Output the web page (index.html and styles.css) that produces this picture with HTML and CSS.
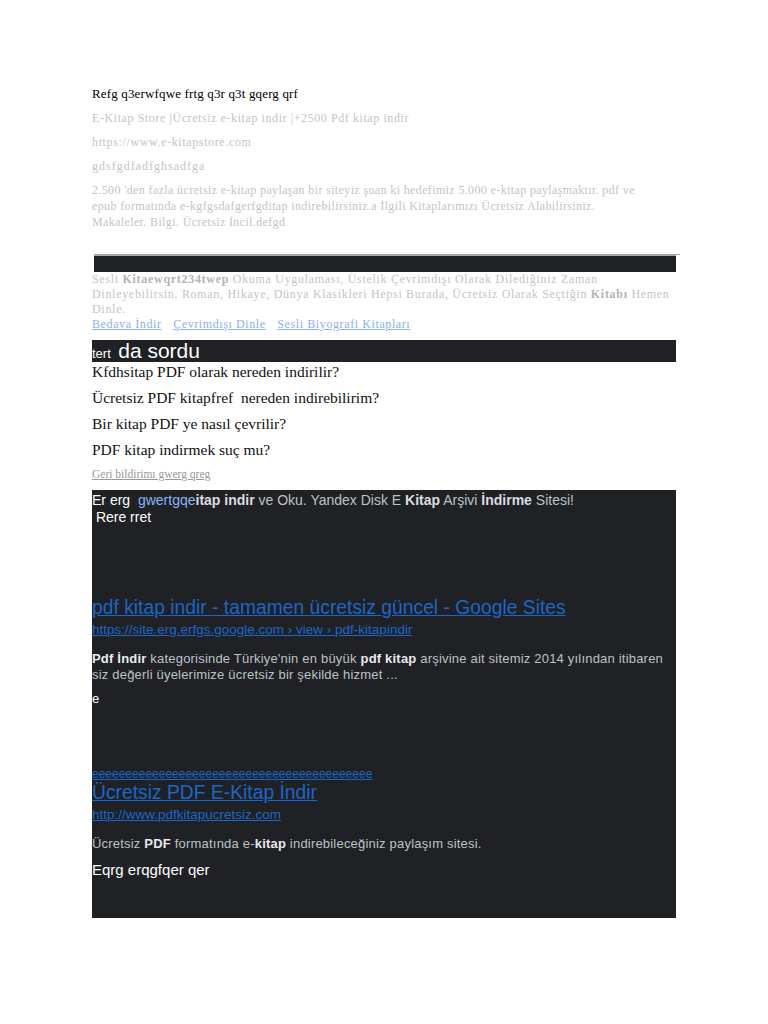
FILE: index.html
```html
<!DOCTYPE html>
<html lang="tr">
<head>
<meta charset="utf-8">
<title>Kitap</title>
<link rel="stylesheet" href="styles.css">
</head>
<body>
<div class="page">
  <p class="title">Refg q3erwfqwe frtg q3r q3t gqerg qrf</p>
  <p class="muted line1">E-Kitap Store |Ücretsiz e-kitap indir |+2500 Pdf kitap indir</p>
  <p class="muted line2">https://www.e-kitapstore.com</p>
  <p class="muted line3">gdsfgdfadfghsadfga</p>
  <p class="muted para">2.500 'den fazla ücretsiz e-kitap paylaşan bir siteyiz şuan ki hedefimiz 5.000 e-kitap paylaşmaktır. pdf ve epub formatında e-kgfgsdafgerfgditap indirebilirsiniz.a İlgili Kitaplarımızı Ücretsiz Alabilirsiniz. Makaleler. Bilgi. Ücretsiz İncil.defgd</p>
  <div class="bar1"></div>
  <p class="muted sesli">Sesli <b>Kitaewqrt234twep</b> Okuma Uygulaması, Üstelik Çevrimdışı Olarak Dilediğiniz Zaman Dinleyebilirsin. Roman, Hikaye, Dünya Klasikleri Hepsi Burada, Ücretsiz Olarak Seçtiğin <b>Kitabı</b> Hemen Dinle.</p>
  <p class="links"><a href="#">Bedava İndir</a> <a href="#">Çevrimdışı Dinle</a> <a href="#">Sesli Biyografi Kitapları</a></p>
  <div class="bar2"><span class="small">tert</span> <span class="big">da sordu</span></div>
  <p class="q q1">Kfdhsitap PDF olarak nereden indirilir?</p>
  <p class="q">Ücretsiz PDF kitapfref&nbsp; nereden indirebilirim?</p>
  <p class="q">Bir kitap PDF ye nasıl çevrilir?</p>
  <p class="q">PDF kitap indirmek suç mu?</p>
  <p class="feedback"><a href="#">Geri bildirimı gwerg qreg</a></p>
  <div class="dark">
    <p class="d-intro">Er erg &nbsp;<span class="lb">gwertgqe</span><b>itap indir</b> <span class="g">ve Oku. Yandex Disk E</span> <b>Kitap</b> <span class="g">Arşivi</span> <b>İndirme</b> <span class="g">Sitesi!</span><br>&nbsp;Rere rret</p>
    <p class="r-title r1"><a href="#">pdf kitap indir - tamamen ücretsiz güncel - Google Sites</a></p>
    <p class="r-url"><a href="#">https://site.erg.erfgs.google.com › view › pdf-kitapindir</a></p>
    <p class="r-desc"><b>Pdf İndir</b> kategorisinde Türkiye'nin en büyük <b>pdf kitap</b> arşivine ait sitemiz 2014 yılından itibaren siz değerli üyelerimize ücretsiz bir şekilde hizmet ...</p>
    <p class="d-e">e</p>
    <p class="r-eee"><a href="#">eeeeeeeeeeeeeeeeeeeeeeeeeeeeeeeeeeeeeeeeee</a></p>
    <p class="r-title r2"><a href="#">Ücretsiz PDF E-Kitap İndir</a></p>
    <p class="r-url"><a href="#">http://www.pdfkitapucretsiz.com</a></p>
    <p class="r-desc r-desc2">Ücretsiz <b>PDF</b> formatında e-<b>kitap</b> indirebileceğiniz paylaşım sitesi.</p>
    <p class="d-end">Eqrg erqgfqer qer</p>
  </div>
</div>
</body>
</html>
```

FILE: styles.css
```css
* { box-sizing: border-box; }
html, body { margin: 0; padding: 0; background: #ffffff; }
body { font-family: "Liberation Serif", "Times New Roman", serif; }
p { margin: 0; }

.page {
  width: 768px;
  padding: 86px 0 0 92px;
}

.title {
  font-size: 13px;
  line-height: 16px;
  color: #000;
  letter-spacing: 0.15px;
}

.muted {
  color: #c4c4c4;
  font-size: 12px;
  line-height: 16px;
  width: 586px;
}
.muted b { color: #b4b4b4; }
.line1 { margin-top: 8px; letter-spacing: 0.58px; }
.line2 { margin-top: 8px; letter-spacing: 0.63px; }
.line3 { margin-top: 8px; letter-spacing: 1px; }
.para { margin-top: 8px; letter-spacing: 0.37px; width: 556px; }

.bar1 {
  margin-top: 24px;
  margin-left: 2px;
  width: 582px;
  height: 18px;
  background: #202124;
  border-top: 2px solid #a8a8a8;
  position: relative;
}
.bar1::after {
  content: "";
  position: absolute;
  right: -4px;
  top: -2px;
  width: 4px;
  height: 1px;
  background: #a8a8a8;
}

.sesli {
  margin-top: 0;
  width: 592px;
  line-height: 15px;
  letter-spacing: 0.7px;
}

.links {
  font-size: 12px;
  line-height: 15px;
  letter-spacing: 0.6px;
}
.links a {
  color: #8ab0f0;
  margin-right: 8px;
}

.bar2 {
  margin-top: 8px;
  width: 584px;
  height: 22px;
  background: #202124;
  color: #fff;
  font-family: "Liberation Sans", Arial, sans-serif;
  line-height: 22px;
  white-space: nowrap;
  overflow: hidden;
}
.bar2 .small { font-size: 13px; margin-right: 3px; }
.bar2 .big { font-size: 21px; }

.q {
  font-size: 15.5px;
  line-height: 18px;
  color: #111;
  margin-top: 8px;
}
.q1 { margin-top: 1px; }

.feedback {
  margin-top: 8px;
  font-size: 11.5px;
  line-height: 14px;
}
.feedback a { color: #999; }

.dark {
  margin-top: 9px;
  width: 584px;
  height: 428px;
  background: #202124;
  font-family: "Liberation Sans", Arial, sans-serif;
  padding-top: 2px;
}
.dark a { color: #1a66c9; }

.d-intro {
  color: #fff;
  font-size: 14px;
  line-height: 17px;
}
.d-intro .lb { color: #8ab4f8; }
.d-intro b { color: #dadce0; }
.d-intro .g { color: #bdc1c6; }

.r-title {
  font-size: 19.3px;
  line-height: 24px;
}
.r1 { margin-top: 70px; }
.r2 { margin-top: 0; }

.r-url {
  font-size: 13.5px;
  line-height: 18px;
  padding-top: 1px;
}

.r-desc {
  margin-top: 12px;
  color: #bdc1c6;
  font-size: 13px;
  line-height: 16px;
  letter-spacing: 0.2px;
}
.r-desc b { color: #e8eaed; }

.d-e {
  margin-top: 8px;
  color: #fff;
  font-size: 13px;
  line-height: 16px;
}

.r-eee {
  margin-top: 60px;
  font-size: 12px;
  line-height: 14px;
}

.d-end {
  margin-top: 9px;
  color: #fff;
  font-size: 15px;
  line-height: 18px;
}
```
